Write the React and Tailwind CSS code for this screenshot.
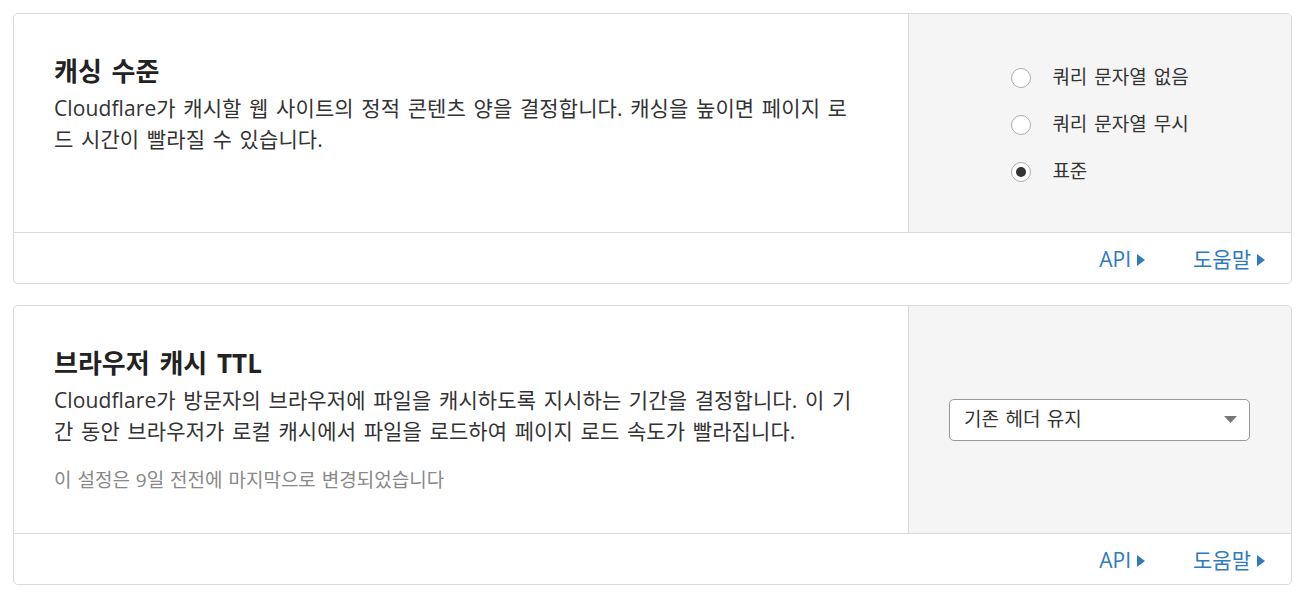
import React from "react";

const font = { fontFamily: '"Open Sans", "Noto Sans CJK KR", sans-serif' };

function Tri() {
  return (
    <svg width="8" height="12" viewBox="0 0 8 12" className="ml-[6px]">
      <path d="M0 0 L8 6 L0 12 Z" fill="#2f7bbf" />
    </svg>
  );
}

function Footer() {
  return (
    <div className="h-[51px] border-t border-[#dadada] flex items-center justify-end pr-[26px] pt-[3px] gap-[48px] text-[21px] text-[#2f7bbf]">
      <a className="flex items-center">API<Tri /></a>
      <a className="flex items-center">도움말<Tri /></a>
    </div>
  );
}

function Radio({ checked, label }) {
  return (
    <div className="flex items-center h-[47px]">
      <span className="w-[20px] h-[20px] rounded-full border border-[#aaaaaa] bg-white flex items-center justify-center">
        {checked && <span className="w-[10px] h-[10px] rounded-full bg-[#333]" />}
      </span>
      <span className="ml-[21px] text-[19px] text-[#333] [word-spacing:2px]">{label}</span>
    </div>
  );
}

export default function App() {
  return (
    <div style={font} className="p-[13px] pr-[19px] bg-white flex flex-col gap-[21px] text-[#333]">
      <div className="border border-[#dadada] rounded-[5px] bg-white overflow-hidden">
        <div className="flex h-[218px]">
          <div className="flex-1 pl-[40px] pr-[54px] pt-[41px]">
            <h2 className="text-[26px] font-bold leading-[32px] text-[#222] [word-spacing:3px]">캐싱 수준</h2>
            <p className="mt-[6px] text-[21px] leading-[31px] tracking-[0.1px] [word-spacing:2px]">
              Cloudflare가 캐시할 웹 사이트의 정적 콘텐츠 양을 결정합니다. 캐싱을 높이면 페이지 로드 시간이 빨라질 수 있습니다.
            </p>
          </div>
          <div className="w-[383px] bg-[#f5f5f5] border-l border-[#dadada] flex items-center justify-center">
            <div className="flex flex-col pt-[3px]">
              <Radio label="쿼리 문자열 없음" />
              <Radio label="쿼리 문자열 무시" />
              <Radio checked label="표준" />
            </div>
          </div>
        </div>
        <Footer />
      </div>

      <div className="border border-[#dadada] rounded-[5px] bg-white overflow-hidden">
        <div className="flex h-[227px]">
          <div className="flex-1 pl-[40px] pr-[54px] pt-[41px]">
            <h2 className="text-[26px] font-bold leading-[32px] text-[#222] [word-spacing:3px]">브라우저 캐시 TTL</h2>
            <p className="mt-[6px] text-[21px] leading-[31px] tracking-[0.1px] [word-spacing:2px]">
              Cloudflare가 방문자의 브라우저에 파일을 캐시하도록 지시하는 기간을 결정합니다. 이 기간 동안 브라우저가 로컬 캐시에서 파일을 로드하여 페이지 로드 속도가 빨라집니다.
            </p>
            <p className="mt-[18px] text-[19px] leading-[31px] text-[#888] [word-spacing:1px]">이 설정은 9일 전전에 마지막으로 변경되었습니다</p>
          </div>
          <div className="w-[383px] bg-[#f5f5f5] border-l border-[#dadada] flex items-center pl-[40px]">
            <div className="w-[301px] h-[42px] bg-white border border-[#999] rounded-[5px] flex items-center justify-between pl-[14px] pr-[12px]">
              <span className="text-[19px] text-[#333] [word-spacing:1.5px]">기존 헤더 유지</span>
              <svg width="13" height="7" viewBox="0 0 13 7">
                <path d="M0 0 L13 0 L6.5 7 Z" fill="#777" />
              </svg>
            </div>
          </div>
        </div>
        <Footer />
      </div>
    </div>
  );
}
